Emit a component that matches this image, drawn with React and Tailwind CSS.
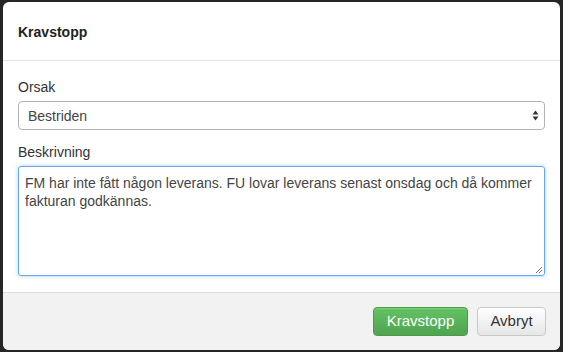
import React from 'react'

export default function App(){
  return (
    <div className="w-[563px] h-[352px] bg-[#262626] pt-[2px] pl-[3px] overflow-hidden" style={{fontFamily:'"Liberation Sans", Arial, sans-serif'}}>
      <div className="w-[557px] h-[348px] bg-white rounded-[6px] overflow-hidden flex flex-col text-[#333]">
        <div className="h-[59px] border-b border-[#e5e5e5] pl-[15px] flex items-center">
          <h3 className="text-[14px] font-bold text-[#222] leading-none pt-[1px]">Kravstopp</h3>
        </div>
        <div className="flex-1 px-[15px] pt-[17px]">
          <label className="block text-[14px] leading-[18px]">Orsak</label>
          <div className="relative mt-[5px]">
            <div className="h-[29px] border border-[#b3b3b3] rounded-[4px] pl-[9px] pt-[1px] flex items-center text-[14px] text-[#444] bg-white">Bestriden</div>
            <svg className="absolute right-[6px] top-[9px]" width="7" height="11" viewBox="0 0 7 11">
              <path d="M3.5 0.5 L6.5 4.5 L0.5 4.5 Z" fill="#333"/>
              <path d="M3.5 10.5 L6.5 6.5 L0.5 6.5 Z" fill="#333"/>
            </svg>
          </div>
          <label className="block text-[14px] leading-[18px] mt-[13px]">Beskrivning</label>
          <div className="relative mt-[5px]">
            <div className="h-[110px] border border-[#6aa6e6] rounded-[3px] shadow-[0_0_4px_rgba(82,168,236,0.5)] px-[6px] pt-[7px] text-[14px] leading-[18px] text-[#444]">
              FM har inte fått någon leverans. FU lovar leverans senast onsdag och då kommer fakturan godkännas.
            </div>
            <svg className="absolute right-[2px] bottom-[2px]" width="8" height="8" viewBox="0 0 8 8">
              <path d="M7 1 L1 7 M7 4 L4 7" stroke="#777" strokeWidth="1"/>
            </svg>
          </div>
        </div>
        <div className="h-[58px] border-t border-[#dcdcdc] bg-[#f2f2f2] flex items-center justify-end gap-[9px] pr-[14px] pb-[1px]">
          <button className="h-[29px] w-[95px] rounded-[4px] border border-[#4a9a4a] bg-gradient-to-b from-[#62c462] to-[#51a351] text-white text-[15px] shadow-[inset_0_1px_0_rgba(255,255,255,0.2)]">Kravstopp</button>
          <button className="h-[29px] w-[69px] rounded-[4px] border border-[#c8c8c8] bg-gradient-to-b from-white to-[#e6e6e6] text-[#333] text-[15px]">Avbryt</button>
        </div>
      </div>
    </div>
  )
}
